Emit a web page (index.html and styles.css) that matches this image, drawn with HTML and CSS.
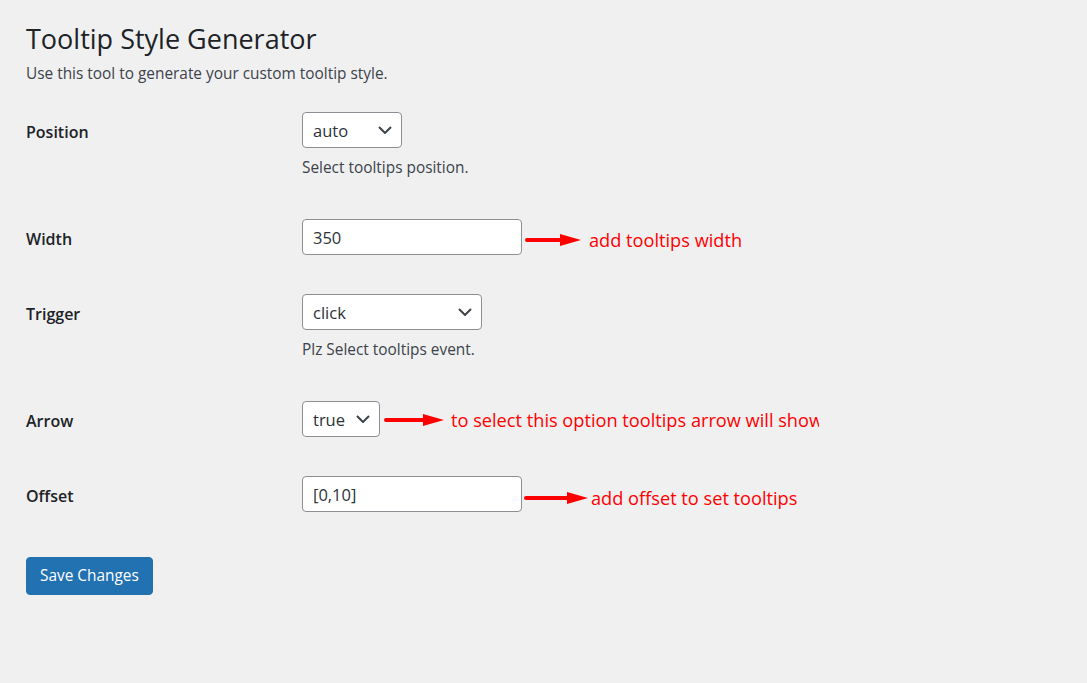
FILE: index.html
```html
<!DOCTYPE html>
<html lang="en">
<head>
<meta charset="utf-8">
<title>Tooltip Style Generator</title>
<link rel="stylesheet" href="styles.css">
</head>
<body>
<div class="wrap">
  <h1 class="page-title">Tooltip Style Generator</h1>
  <p class="page-desc">Use this tool to generate your custom tooltip style.</p>

  <form class="settings">
    <div class="row">
      <label class="row-label">Position</label>
      <div class="row-field">
        <div class="control-line">
          <span class="select-wrap select-auto">
            <select class="select"><option>auto</option></select>
            <svg class="chev" viewBox="0 0 14 8" width="14" height="8"><path d="M1 1l6 6 6-6" fill="none" stroke="#3c434a" stroke-width="2"/></svg>
          </span>
        </div>
        <p class="help">Select tooltips position.</p>
      </div>
    </div>

    <div class="row">
      <label class="row-label">Width</label>
      <div class="row-field">
        <div class="control-line">
          <input class="text-input" type="text" value="350">
          <span class="note note-1">
            <svg class="arrow arrow-1" viewBox="0 0 56 14" width="56" height="14"><line x1="2" y1="7" x2="38" y2="7" stroke="#ff0000" stroke-width="4" stroke-linecap="round"/><path d="M35 1L56 7L35 13Z" fill="#ff0000"/></svg>
            <span class="note-text">add tooltips width</span>
          </span>
        </div>
      </div>
    </div>

    <div class="row">
      <label class="row-label">Trigger</label>
      <div class="row-field">
        <div class="control-line">
          <span class="select-wrap select-click">
            <select class="select"><option>click</option></select>
            <svg class="chev" viewBox="0 0 14 8" width="14" height="8"><path d="M1 1l6 6 6-6" fill="none" stroke="#3c434a" stroke-width="2"/></svg>
          </span>
        </div>
        <p class="help">Plz Select tooltips event.</p>
      </div>
    </div>

    <div class="row">
      <label class="row-label">Arrow</label>
      <div class="row-field">
        <div class="control-line">
          <span class="select-wrap select-true">
            <select class="select"><option>true</option></select>
            <svg class="chev" viewBox="0 0 14 8" width="14" height="8"><path d="M1 1l6 6 6-6" fill="none" stroke="#3c434a" stroke-width="2"/></svg>
          </span>
          <span class="note note-2">
            <svg class="arrow arrow-2" viewBox="0 0 60 14" width="60" height="14"><line x1="2" y1="7" x2="42" y2="7" stroke="#ff0000" stroke-width="4" stroke-linecap="round"/><path d="M39 1L60 7L39 13Z" fill="#ff0000"/></svg>
            <span class="note-text clip">to select this option tooltips arrow will show</span>
          </span>
        </div>
      </div>
    </div>

    <div class="row">
      <label class="row-label">Offset</label>
      <div class="row-field">
        <div class="control-line">
          <input class="text-input" type="text" value="[0,10]">
          <span class="note note-3">
            <svg class="arrow arrow-3" viewBox="0 0 64 14" width="64" height="14"><line x1="2" y1="7" x2="45" y2="7" stroke="#ff0000" stroke-width="4" stroke-linecap="round"/><path d="M43 1L64 7L43 13Z" fill="#ff0000"/></svg>
            <span class="note-text">add offset to set tooltips</span>
          </span>
        </div>
      </div>
    </div>

    <div class="submit">
      <button type="button" class="button-primary">Save Changes</button>
    </div>
  </form>
</div>
</body>
</html>
```

FILE: styles.css
```css
* { box-sizing: border-box; }

html, body {
  margin: 0;
  padding: 0;
  background: #f0f0f1;
}

body {
  font-family: "Open Sans", "Noto Sans", "Liberation Sans", sans-serif;
  color: #3c434a;
}

.wrap {
  padding: 21px 0 0 26px;
}

.page-title {
  margin: 0;
  font-size: 27px;
  font-weight: 400;
  line-height: 36px;
  color: #1d2327;
}

.page-desc {
  margin: 5px 0 0;
  font-size: 15.4px;
  line-height: 24px;
  color: #3c434a;
}

.settings {
  margin-top: 7px;
}

.row {
  display: flex;
  align-items: flex-start;
  padding: 19px 0 20px;
}

.row-label {
  width: 276px;
  flex: none;
  padding-top: 2px;
  margin-bottom: -2px;
  font-size: 16px;
  font-weight: 600;
  line-height: 36px;
  color: #1d2327;
}

.row-field {
  display: flex;
  flex-direction: column;
}

.control-line {
  display: flex;
  align-items: center;
  height: 36px;
}

.select-wrap {
  position: relative;
  display: inline-block;
  height: 36px;
}

.select {
  appearance: none;
  -webkit-appearance: none;
  width: 100%;
  height: 36px;
  margin: 0;
  padding: 0 30px 0 10px;
  border: 1px solid #8c8f94;
  border-radius: 4px;
  background: #fff;
  font-family: inherit;
  font-size: 16.5px;
  color: #2c3338;
}

.select-auto { width: 100px; }
.select-click { width: 180px; }
.select-true { width: 78px; }

.chev {
  position: absolute;
  right: 10px;
  top: 14px;
  pointer-events: none;
}

.text-input {
  width: 220px;
  height: 36px;
  margin: 0;
  padding: 0 10px;
  border: 1px solid #8c8f94;
  border-radius: 4px;
  background: #fff;
  font-family: inherit;
  font-size: 16.5px;
  color: #2c3338;
}

.help {
  margin: 8px 0 0;
  font-size: 15.4px;
  line-height: 24px;
  color: #3c434a;
}

.note {
  display: flex;
  align-items: center;
  color: #ff0000;
  font-size: 18.2px;
  line-height: 24px;
  white-space: nowrap;
}

.note-1 { margin: 6px 0 0 3px; }
.note-2 { margin: 2px 0 0 4px; }
.note-3 { margin: 8px 0 0 2px; }

.arrow { flex: none; }
.arrow-1 { margin-right: 8px; }
.arrow-2 { margin-right: 7px; }
.arrow-3 { margin-right: 3px; }

.note-text.clip {
  display: block;
  width: 368px;
  overflow: hidden;
}

.submit {
  padding-top: 25px;
}

.button-primary {
  display: block;
  height: 38px;
  padding: 0 13px;
  border: 1px solid #2271b1;
  border-radius: 4px;
  background: #2271b1;
  color: #fff;
  font-family: inherit;
  font-size: 15.4px;
  line-height: 36px;
  cursor: pointer;
}
```
